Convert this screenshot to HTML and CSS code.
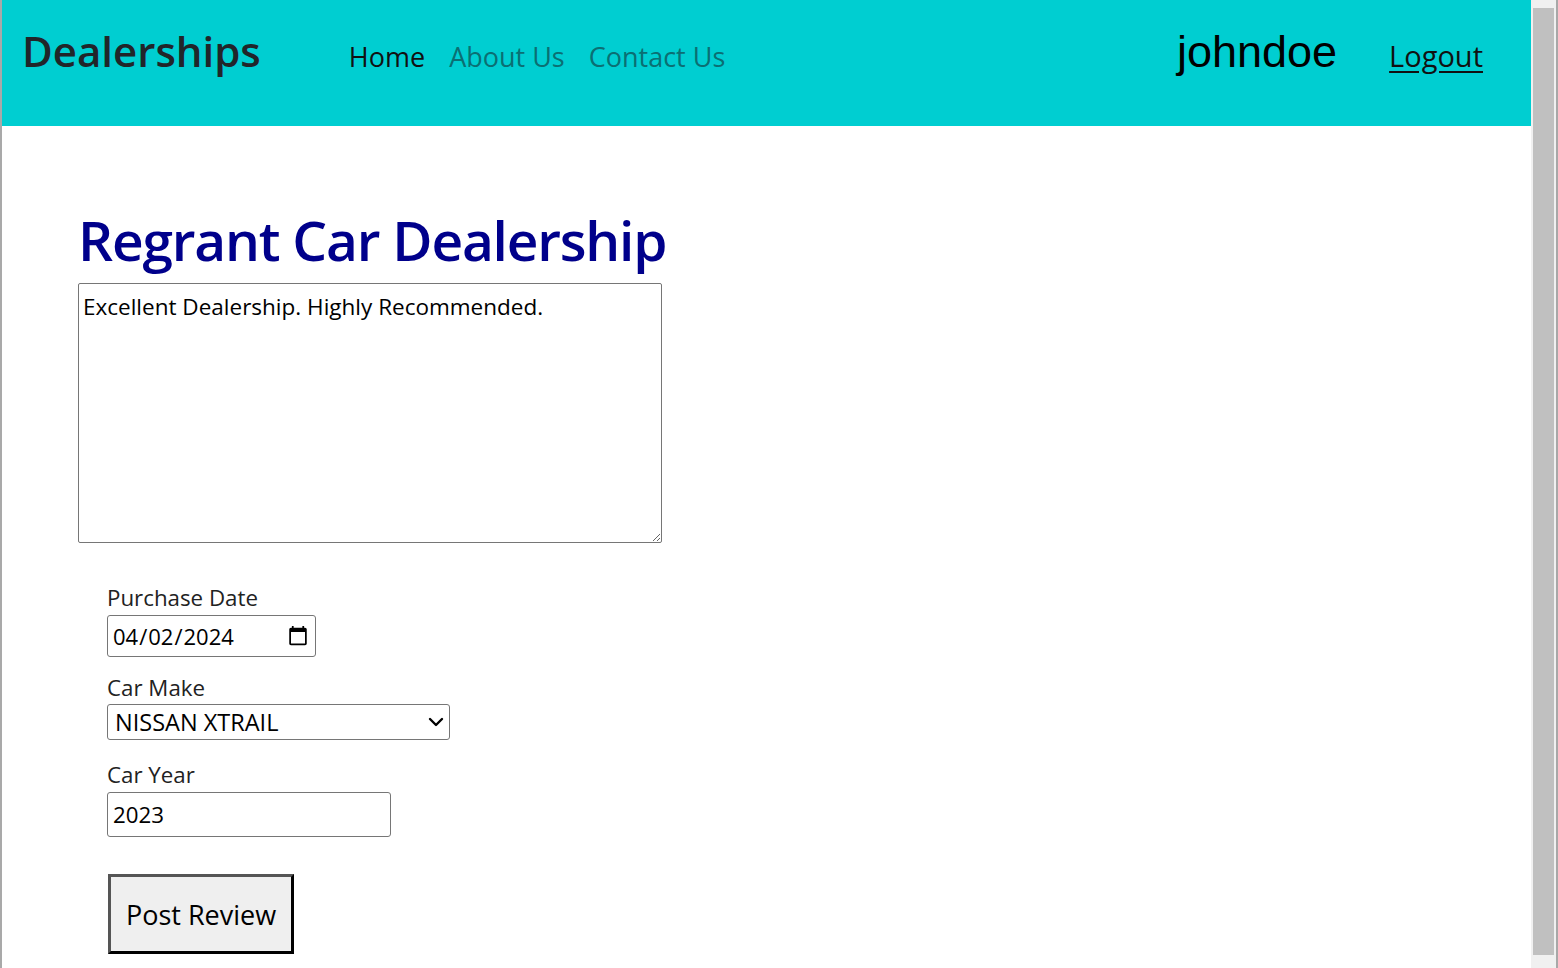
FILE: index.html
```html
<!DOCTYPE html>
<html lang="en">
<head>
<meta charset="utf-8">
<title>Dealerships</title>
<link rel="stylesheet" href="styles.css">
</head>
<body>
<div class="frame">
  <div class="page">
    <header class="nav">
      <span class="brand">Dealerships</span>
      <nav class="links">
        <a class="link link-active" href="#">Home</a>
        <a class="link" href="#">About Us</a>
        <a class="link" href="#">Contact Us</a>
      </nav>
      <div class="user">
        <span class="username">johndoe</span>
        <a class="logout" href="#">Logout</a>
      </div>
    </header>
    <main class="content">
      <h1 class="title">Regrant Car Dealership</h1>
      <textarea class="review" rows="7">Excellent Dealership. Highly Recommended.</textarea>
      <div class="fields">
        <label class="field-label" for="pdate">Purchase Date</label>
        <input class="date-input" id="pdate" type="date" value="2024-04-02">
        <label class="field-label label-gap" for="make">Car Make</label>
        <div class="select-wrap">
          <select class="make-select" id="make">
            <option>NISSAN XTRAIL</option>
          </select>
          <svg class="select-arrow" width="16" height="10" viewBox="0 0 16 10" aria-hidden="true">
            <path d="M2 2 L8 8 L14 2" fill="none" stroke="#000" stroke-width="2.4" stroke-linecap="round" stroke-linejoin="round"/>
          </svg>
        </div>
        <label class="field-label label-gap2" for="year">Car Year</label>
        <input class="year-input" id="year" type="text" value="2023">
        <button class="post-btn" type="button">Post Review</button>
      </div>
    </main>
  </div>
  <div class="scrollbar"><div class="scroll-thumb"></div></div>
  <div class="edge"></div>
</div>
</body>
</html>
```

FILE: styles.css
```css
html, body {
  margin: 0;
  padding: 0;
  background: #ffffff;
}
body {
  font-family: "Open Sans", "Noto Sans", sans-serif;
  color: #111;
}
.frame {
  display: flex;
  height: 968px;
  overflow: hidden;
}
.page {
  flex: 1;
  border-left: 2px solid #a9a9a9;
  background: #fff;
  min-width: 0;
}
.nav {
  height: 126px;
  box-sizing: border-box;
  background: #00ced1;
  display: flex;
  align-items: baseline;
  padding: 22px 48px 0 20px;
}
.brand {
  font-size: 42px;
  font-weight: 600;
  color: #212529;
}
.links {
  display: flex;
  gap: 24px;
  margin-left: 88px;
}
.link {
  font-size: 27px;
  color: #0b6f73;
  text-decoration: none;
}
.link-active {
  color: #111;
}
.user {
  margin-left: auto;
  display: flex;
  align-items: baseline;
  gap: 52px;
}
.username {
  font-family: "Liberation Sans", Arial, sans-serif;
  font-size: 45px;
  color: #000;
}
.logout {
  font-size: 29px;
  color: #111;
  text-decoration: underline;
  text-underline-offset: 4px;
}
.content {
  padding: 76px 0 0 76px;
}
.title {
  margin: 0;
  font-size: 55px;
  font-weight: 600;
  color: #00008b;
  line-height: 76px;
  letter-spacing: -1.2px;
}
.review {
  display: block;
  margin-top: 5px;
  width: 584px;
  height: 260px;
  box-sizing: border-box;
  border: 1px solid #767676;
  border-radius: 2px;
  padding: 8px 4px 5px;
  font-family: "Open Sans", sans-serif;
  font-size: 22.5px;
  line-height: 1.3;
  color: #000;
  resize: both;
}
.fields {
  display: flex;
  flex-direction: column;
  align-items: flex-start;
  padding: 40px 0 0 29px;
}
.field-label {
  font-size: 22.3px;
  line-height: 30px;
  color: #222;
  margin-bottom: 2px;
}
.label-gap {
  margin-top: 16px;
}
.label-gap2 {
  margin-top: 20px;
}
.date-input {
  width: 209px;
  height: 42px;
  box-sizing: border-box;
  border: 1px solid #767676;
  border-radius: 3px;
  padding: 0 4px;
  margin: 0;
  font-family: "Open Sans", sans-serif;
  font-size: 22px;
  color: #000;
}
.select-wrap {
  position: relative;
  width: 343px;
  height: 36px;
  margin-top: -1px;
}
.make-select {
  -webkit-appearance: none;
  appearance: none;
  display: block;
  width: 343px;
  height: 36px;
  box-sizing: border-box;
  border: 1px solid #767676;
  border-radius: 3px;
  padding: 0 30px 0 7px;
  margin: 0;
  font-family: "Open Sans", sans-serif;
  font-size: 23.5px;
  color: #000;
  background: #fff;
}
.select-arrow {
  position: absolute;
  right: 6px;
  top: 13px;
  pointer-events: none;
}
.year-input {
  width: 284px;
  height: 45px;
  box-sizing: border-box;
  border: 1px solid #767676;
  border-radius: 3px;
  padding: 0 5px;
  margin: 0 0 37px;
  font-family: "Open Sans", sans-serif;
  font-size: 22.3px;
  color: #000;
}
.post-btn {
  width: 186px;
  height: 80px;
  box-sizing: border-box;
  margin-left: 1px;
  border-style: solid;
  border-width: 3px;
  border-color: #555 #000 #000 #555;
  background: #efefef;
  font-family: "Open Sans", sans-serif;
  font-size: 27px;
  color: #000;
  padding: 0;
}
.scrollbar {
  width: 25px;
  background: #f0f0f0;
  padding: 8px 2px 13px 2px;
  box-sizing: border-box;
  display: flex;
}
.scroll-thumb {
  flex: 1;
  background: #c0c0c0;
}
.edge {
  width: 2px;
  background: #a8a8a8;
}
```
